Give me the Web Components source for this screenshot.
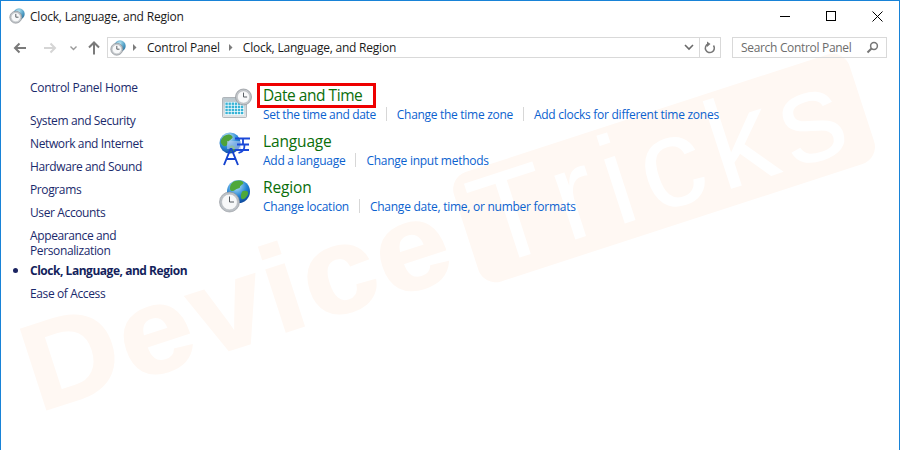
<!doctype html>
<html><head><meta charset="utf-8"><style>
html,body{margin:0;padding:0;background:#fff}
body{font-family:"Open Sans","Noto Sans",sans-serif;font-size:12px}
</style></head><body>
<cp-window></cp-window>
<script>
const clockFace=(cx,cy,r)=>`<circle cx="${cx}" cy="${cy}" r="${r}" fill="#c3c7cb" stroke="#8f9499" stroke-width=".7"/><circle cx="${cx}" cy="${cy}" r="${r*.76}" fill="#f8f9fa" stroke="#aeb2b6" stroke-width=".4"/><path d="M${cx} ${cy-r*.55}V${cy}H${cx+r*.45}" fill="none" stroke="#5a6065" stroke-width="1"/>`;
let uid=0;
const smallGlobe=()=>{const i='sg'+(uid++);return `<svg width="16" height="16" viewBox="0 0 16 16"><defs><radialGradient id="${i}" cx=".5" cy=".2" r=".9"><stop offset="0" stop-color="#a9dcec"/><stop offset=".5" stop-color="#4d9cc4"/><stop offset="1" stop-color="#1d5f8a"/></radialGradient></defs><circle cx="10" cy="6" r="5.700" fill="url(#${i})"/><path d="M7 2.500c2 -.5 4 .5 4 2l-2 2-3-1z" fill="#bfe4ee" opacity=".7"/>${clockFace(6.8,9.2,6)}</svg>`};
const ICONS={
 date:`<svg width="36" height="36" viewBox="0 0 36 36" style="overflow:visible"><defs><linearGradient id="cal" x1="0" y1="0" x2="0" y2="1"><stop offset="0" stop-color="#b9c6cc"/><stop offset="1" stop-color="#e3e6e8"/></linearGradient></defs><rect x="3.500" y="11.500" width="24" height="20" rx="1" fill="url(#cal)" stroke="#a4aaaf" stroke-width=".8"/><rect x="6" y="16" width="19" height="13" fill="#fff"/><g fill="#38b4d6">${[0,1,2,3].map(r=>[0,1,2,3,4,5].map(c=>`<rect x="${6.400+c*3.100}" y="${16.500+r*3.100}" width="2.400" height="2.400"/>`).join('')).join('')}</g>${clockFace(24.5,11,8)}</svg>`,
 lang:`<svg width="36" height="36" viewBox="0 0 36 36" style="overflow:visible"><defs><radialGradient id="lg" cx=".4" cy=".25" r=".85"><stop offset="0" stop-color="#d7f0fb"/><stop offset=".5" stop-color="#2f8ed8"/><stop offset="1" stop-color="#0b3f9a"/></radialGradient></defs><circle cx="11" cy="11" r="10.500" fill="url(#lg)"/><path d="M5 4c3-2 6-2 8 0s-1 3-3 5-1 4-3 5-4-1-5-3 1-5 3-7zM11 14c3-1 5 0 5 2s-3 4-4 4-2-4-1-6z" fill="#4ea23a"/><path d="M8 9h14v8H8z" fill="#b7cdf2" opacity=".6"/><path d="M16 6.500h15M18 12.500h12M16 18h14M24 6.500v6M25.500 12.500c0 5-1 7-6 8.500" fill="none" stroke="#1a48d8" stroke-width="1.800"/><path d="M5 33 11.500 17h1L19 33M7.500 27h9" fill="none" stroke="#1543d0" stroke-width="1.900"/></svg>`,
 region:`<svg width="36" height="36" viewBox="0 0 36 36" style="overflow:visible"><defs><radialGradient id="rg" cx=".4" cy=".25" r=".85"><stop offset="0" stop-color="#c4ecfa"/><stop offset=".55" stop-color="#1f82d4"/><stop offset="1" stop-color="#093a8f"/></radialGradient></defs><circle cx="19.500" cy="13.500" r="11.500" fill="url(#rg)"/><path d="M13 5c3-3 9-3 11-1s-3 3-3 5-3 1-5 3-5 1-5-1 0-4 2-6zM24 13c3-1 6 0 5 3s-4 6-6 5-1-7 1-8z" fill="#4ea83a"/><circle cx="10.500" cy="24" r="10" fill="#bcc1c6" stroke="#8d9298" stroke-width=".6"/><circle cx="10.500" cy="24" r="7.800" fill="#f7f8f9" stroke="#a9adb2" stroke-width=".4"/><path d="M10.500 18.500V24H15" fill="none" stroke="#555b60" stroke-width="1"/></svg>`
};
function def(name,html){customElements.define(name,class extends HTMLElement{connectedCallback(){if(this.shadowRoot)return;const s=this.attachShadow({mode:'open'});s.innerHTML=typeof html==='function'?html(this):html;}});}
const F=`font-family:"Open Sans","Noto Sans",sans-serif;`;
def('cp-titlebar',()=>`<style>:host{display:flex;align-items:center;height:30px;${F}color:#1a1a1a;font-size:12px}
.ico{margin:0 5px 0 8px;display:flex}.t{flex:1;letter-spacing:-.2px}
.b{width:46px;height:30px;display:flex;align-items:center;justify-content:center}</style>
<span class="ico">${smallGlobe()}</span><span class="t">Clock, Language, and Region</span>
<span class="b"><svg width="11" height="11"><path d="M0 5.500h10" stroke="#000"/></svg></span>
<span class="b"><svg width="11" height="11"><rect x=".5" y=".5" width="9" height="9" fill="none" stroke="#000"/></svg></span>
<span class="b" style="margin-right:-1px"><svg width="11" height="11"><path d="M.5.500l10 10M10.500.500l-10 10" stroke="#000"/></svg></span>`);
def('cp-toolbar',()=>`<style>:host{display:flex;align-items:center;height:23px;margin:5px 0 0;${F}color:#1a1a1a;font-size:12px}
.nav{display:flex;width:106px;height:23px;flex:none}
.addr{flex:none;width:591px;height:19px;border:1px solid #d9d9d9;display:flex;align-items:center}
.addr .ic{margin-left:2px;display:flex}
.crumb{letter-spacing:-.22px}
.sep{width:4px;height:7px;margin:0 10px 0 9px;flex:none;display:flex}
.chev{margin-left:auto;width:20px;display:flex;justify-content:center}
.ref{flex:none;width:20px;height:19px;border:1px solid #d9d9d9;border-left:0;display:flex;align-items:center;justify-content:center}
.search{flex:none;margin-left:11px;width:145px;height:19px;border:1px solid #d9d9d9;display:flex;align-items:center;color:#6d6d6d;letter-spacing:-.32px;padding-left:8px}
.search svg{margin-left:auto;margin-right:7px}</style>
<div class="nav"><svg width="106" height="23" viewBox="0 0 106 23"><g fill="none" stroke-width="2"><path d="M25 12H14.500M18.500 7.500 14 12l4.500 4.500" stroke="#7a7a7a"/><path d="M43 12H53.500M49.500 7.500 54 12l-4.500 4.500" stroke="#d5d5d5"/><path d="M69.500 10.500 72.500 13.500 75.500 10.500" stroke="#9a9a9a" stroke-width="1.400"/><path d="M93 18.500V7M88 11.500 93 6.500l5 5" stroke="#7a7a7a"/></g></svg></div>
<div class="addr"><span class="ic">${smallGlobe()}</span><span class="sep" style="margin-left:7px"><svg width="4" height="7"><path d="M0 0l3.500 3.500L0 7z" fill="#7c7c7c"/></svg></span><span class="crumb">Control Panel</span><span class="sep"><svg width="4" height="7"><path d="M0 0l3.500 3.500L0 7z" fill="#7c7c7c"/></svg></span><span class="crumb">Clock, Language, and Region</span>
<span class="chev"><svg width="10" height="7"><path d="M1 1l4 4 4-4" fill="none" stroke="#6a6a6a" stroke-width="1.600"/></svg></span></div>
<div class="ref"><svg width="12" height="13" viewBox="0 0 12 13"><path d="M9.500 4.500A4.500 4.500 0 1 1 4 3" fill="none" stroke="#767676" stroke-width="1.500"/><path d="M3 .5 6.500 3 3 6z" fill="#767676"/></svg></div>
<div class="search">Search Control Panel<svg width="13" height="13" viewBox="0 0 13 13"><circle cx="8" cy="5" r="3.400" fill="none" stroke="#767676" stroke-width="1.500"/><path d="M5.500 7.500 1.500 11.500" stroke="#767676" stroke-width="2"/></svg></div>`);
def('cp-nav-link',`<style>:host{display:block;${F}color:#1a2a6c;font-size:12px;line-height:15px;margin-bottom:8px;letter-spacing:-.38px;position:relative}
:host([current]){font-weight:700;color:#141f5c;letter-spacing:-.47px}
:host([current])::before{content:"";position:absolute;left:-17px;top:5px;width:5px;height:5px;border-radius:50%;background:#1b2461}</style><slot></slot>`);
def('cp-sidebar',`<style>:host{display:block;width:204px;flex:none;box-sizing:border-box;padding:21px 0 0 29px}</style><slot></slot>`);
def('cp-category',h=>`<style>:host{display:grid;grid-template-columns:44px 1fr;${F};height:46px}
.i{display:flex}.h{font-size:15.500px;line-height:18px;color:#0a6e0a;letter-spacing:-.15px;height:20px;position:relative}
</style><div class="i">${ICONS[h.getAttribute('icon')]}</div><div><div class="h"><slot name="title"></slot></div><slot></slot></div>`);
def('cp-links',`<style>:host{display:flex;align-items:center;height:16px}</style><slot></slot>`);
def('cp-link',`<style>:host{display:flex;align-items:center;${F}font-size:12px;color:#0b62cf;letter-spacing:-.26px;line-height:15px}
:host(:not(:last-child))::after{content:"";width:1px;height:14px;background:#d7d7d7;margin:0 10px}</style><slot></slot>`);
def('cp-highlight',`<style>:host{position:absolute;left:-6px;top:-3px;width:119px;height:25px;box-sizing:border-box;border:3px solid #ee0000;pointer-events:none}</style>`);
def('cp-watermark',`<style>:host{position:absolute;left:0;top:0;width:898px;height:449px;overflow:hidden;pointer-events:none;font-family:"Liberation Sans",sans-serif}
.d,.t{position:absolute;white-space:nowrap}
.d{left:38px;top:307px;transform-origin:0 105px;transform:rotate(-18deg) scaleX(1.08);font-weight:700;font-size:122px;line-height:125px;color:#fff8f3;-webkit-text-stroke:2px #fff8f3;letter-spacing:3px}
.t{left:483px;top:171px;width:416px;height:115px;box-sizing:border-box;transform-origin:0 100%;transform:rotate(-18deg);background:#fff8f3;border-radius:18px;color:#fff;font-size:127px;line-height:108px;padding-left:10px;letter-spacing:10px}</style>
<span class="d">Device</span><span class="t">Tricks</span>`);
def('cp-window',`<style>:host{display:flex;flex-direction:column;width:900px;height:450px;box-sizing:border-box;border:1px solid #1883d7;border-bottom:0;background:#fff;position:relative;overflow:hidden}
.body{flex:1;display:flex}.main{flex:1;padding:27px 0 0 14px;position:relative}cp-sidebar{position:relative}cp-titlebar,cp-toolbar{position:relative}</style>
<cp-watermark></cp-watermark>
<cp-titlebar></cp-titlebar><cp-toolbar></cp-toolbar>
<div class="body">
<cp-sidebar>
<cp-nav-link style="margin-bottom:18px;letter-spacing:-.28px">Control Panel Home</cp-nav-link>
<cp-nav-link>System and Security</cp-nav-link>
<cp-nav-link>Network and Internet</cp-nav-link>
<cp-nav-link>Hardware and Sound</cp-nav-link>
<cp-nav-link>Programs</cp-nav-link>
<cp-nav-link>User Accounts</cp-nav-link>
<cp-nav-link style="margin-bottom:5px">Appearance and<br>Personalization</cp-nav-link>
<cp-nav-link current>Clock, Language, and Region</cp-nav-link>
<cp-nav-link>Ease of Access</cp-nav-link>
</cp-sidebar>
<div class="main">
<cp-category icon="date"><span slot="title" style="position:relative;display:inline-block;letter-spacing:-.46px">Date and Time<cp-highlight></cp-highlight></span><cp-links><cp-link style="letter-spacing:-.34px">Set the time and date</cp-link><cp-link style="letter-spacing:-.3px">Change the time zone</cp-link><cp-link>Add clocks for different time zones</cp-link></cp-links></cp-category>
<cp-category icon="lang"><span slot="title">Language</span><cp-links><cp-link>Add a language</cp-link><cp-link>Change input methods</cp-link></cp-links></cp-category>
<cp-category icon="region"><span slot="title">Region</span><cp-links><cp-link>Change location</cp-link><cp-link>Change date, time, or number formats</cp-link></cp-links></cp-category>
</div></div>`);
</script></body></html>
